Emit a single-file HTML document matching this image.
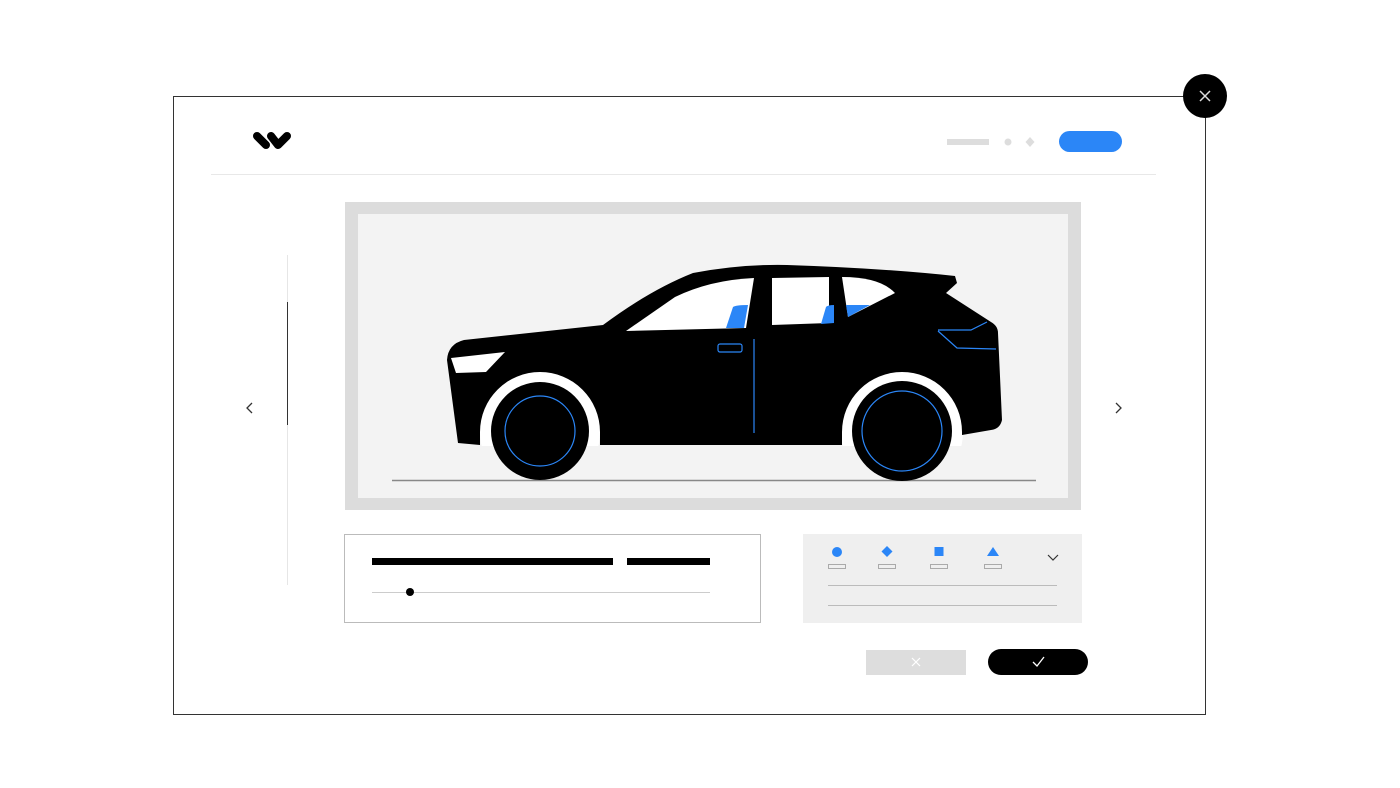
<!DOCTYPE html>
<html><head><style>html,body{margin:0;padding:0;background:#fff;width:1400px;height:788px;overflow:hidden}</style></head>
<body>
<svg width="1400" height="788" viewBox="0 0 1400 788" xmlns="http://www.w3.org/2000/svg">
<defs><clipPath id="c"><rect x="0" y="0" width="1400" height="446"/></clipPath></defs>
<rect x="173.5" y="96.5" width="1032" height="618" fill="#fff" stroke="#333" stroke-width="1"/>
<circle cx="1205" cy="96" r="22" fill="#000"/>
<path d="M1200 91L1210 101M1210 91L1200 101" stroke="#ddd" stroke-width="1.5"/>
<path d="M257 136L266 145M271 136L278 145L287 136" stroke="#000" stroke-width="8" stroke-linecap="round" stroke-linejoin="round" fill="none"/>
<rect x="947" y="139" width="42" height="6" fill="#ddd"/>
<circle cx="1008" cy="142" r="3.5" fill="#ddd"/>
<path d="M1030 137L1034.5 142L1030 147L1025.5 142Z" fill="#ddd"/>
<rect x="1059" y="131" width="63" height="21" rx="10.5" fill="#2b86f7"/>
<line x1="211" y1="174.5" x2="1156" y2="174.5" stroke="#e8e8e8"/>
<line x1="287.5" y1="255" x2="287.5" y2="585" stroke="#e6e6e6"/>
<line x1="287.5" y1="302" x2="287.5" y2="425" stroke="#333"/>
<path d="M252 403L247 408L252 413" stroke="#333" stroke-width="1.3" fill="none"/>
<path d="M1116 403L1121 408L1116 413" stroke="#333" stroke-width="1.3" fill="none"/>
<rect x="345" y="202" width="736" height="308" fill="#dcdcdc"/>
<rect x="358" y="214" width="710" height="284" fill="#f3f3f3"/>
<line x1="392" y1="480.5" x2="1036" y2="480.5" stroke="#888" stroke-width="1.5"/>
<g clip-path="url(#c)" fill="#fff"><circle cx="540" cy="432" r="60"/><circle cx="902" cy="432" r="61"/></g>
<path d="M458 443L447 360Q448 344 464 340L603 325Q650 290 693 273Q740 264 787 265Q880 268 955 276L957 283L946 293L991 322Q998 326 998 333L1002 420Q1000 429 991 430L962 435L962 432A60 60 0 0 0 842 432L842 445L600 445L600 432A60 60 0 0 0 480 432L480 445Z" fill="#000"/>
<circle cx="540" cy="431" r="49" fill="#000"/>
<circle cx="540" cy="431" r="35" fill="none" stroke="#2b86f7" stroke-width="1.2"/>
<circle cx="902" cy="431" r="50" fill="#000"/>
<circle cx="902" cy="431" r="40" fill="none" stroke="#2b86f7" stroke-width="1.2"/>
<path d="M626 331L675 297Q710 280 754 278L746 328Z" fill="#fff"/>
<path d="M733 307Q736 305 748 305L744 328L726 328Z" fill="#2b86f7"/>
<path d="M772 278L829 277L829 323L772 325Z" fill="#fff"/>
<path d="M826 307Q828 305 834 305L834 323L821 324Z" fill="#2b86f7"/>
<path d="M842 277Q880 277 895 293L848 317Z" fill="#fff"/>
<path d="M846 305L870 305L848 317Z" fill="#2b86f7"/>
<path d="M451 358L505 352L486 372L456 373Z" fill="#fff"/>
<line x1="754" y1="339" x2="754" y2="433" stroke="#2b86f7" stroke-width="1.2"/>
<rect x="718" y="344" width="24" height="8" rx="2" fill="none" stroke="#2b86f7" stroke-width="1.2"/>
<path d="M938 330L971 330L987 322M938 331L957 348L996 349" stroke="#2b86f7" stroke-width="1.2" fill="none"/>
<rect x="344.5" y="534.5" width="416" height="88" fill="#fff" stroke="#bbb"/>
<rect x="372" y="558" width="241" height="7" fill="#000"/>
<rect x="627" y="558" width="83" height="7" fill="#000"/>
<line x1="372" y1="592.5" x2="710" y2="592.5" stroke="#ccc"/>
<circle cx="410" cy="592" r="4" fill="#000"/>
<rect x="803" y="534" width="279" height="89" fill="#efefef"/>
<circle cx="837" cy="552" r="5" fill="#2b86f7"/>
<path d="M887 546L892.5 551.5L887 557L881.5 551.5Z" fill="#2b86f7"/>
<rect x="934.5" y="547" width="9" height="9" fill="#2b86f7"/>
<path d="M993 547L999 556L987 556Z" fill="#2b86f7"/>
<g fill="none" stroke="#999" stroke-width="0.8"><rect x="828.5" y="564.5" width="17" height="4"/><rect x="878.5" y="564.5" width="17" height="4"/><rect x="930.5" y="564.5" width="17" height="4"/><rect x="984.5" y="564.5" width="17" height="4"/></g>
<path d="M1048 555L1053 560L1058 555" stroke="#333" stroke-width="1.2" fill="none"/>
<line x1="828" y1="585.5" x2="1057" y2="585.5" stroke="#bbb"/>
<line x1="828" y1="605.5" x2="1057" y2="605.5" stroke="#bbb"/>
<rect x="866" y="650" width="100" height="25" fill="#ddd"/>
<path d="M912 658L920 666M920 658L912 666" stroke="#fff" stroke-width="1.2"/>
<rect x="988" y="649" width="100" height="26" rx="13" fill="#000"/>
<path d="M1033 662L1037 666L1044 657" stroke="#fff" stroke-width="1.3" fill="none"/>
</svg>
</body></html>
